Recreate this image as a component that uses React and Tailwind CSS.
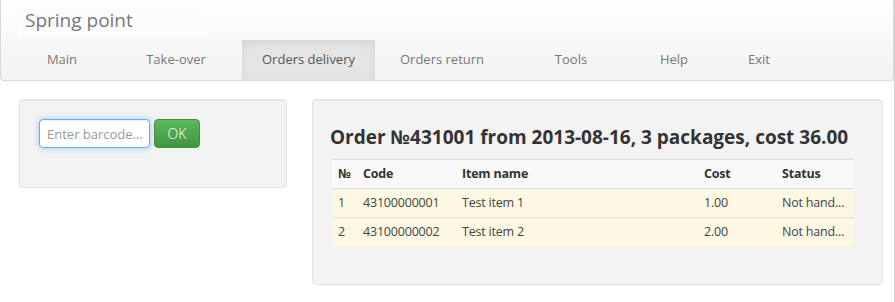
const navItems = [
  { label: "Main", w: "w-[96px]" },
  { label: "Take-over", w: "w-[132px]" },
  { label: "Orders delivery", w: "w-[133px]", active: true },
  { label: "Orders return", w: "w-[134px]" },
  { label: "Tools", w: "w-[124px]" },
  { label: "Help", w: "w-[82px]" },
  { label: "Exit", w: "w-[88px]" },
];

const rows = [
  { n: 1, code: "43100000001", name: "Test item 1", cost: "1.00", status: "Not hand..." },
  { n: 2, code: "43100000002", name: "Test item 2", cost: "2.00", status: "Not hand..." },
];

const App = () => {
  return (
    <div className="w-[895px] h-[302px] bg-white border-r border-[#d4d4d4] font-['Open_Sans',sans-serif] text-[#333]">
      <div className="w-[894px] h-[81px] rounded-b-[4px] border-x border-b border-[#dadada] bg-gradient-to-b from-white to-[#f2f2f2] shadow-[0_1px_4px_rgba(0,0,0,0.06)]">
        <div className="pt-[4px] pl-[17px]">
          <div className="w-[187px] h-[33px] bg-[#fcfcfc] pl-[7px] flex items-center text-[19px] text-[#777]">
            Spring point
          </div>
        </div>
        <div className="flex pl-[13px] mt-[3px]">
          {navItems.map((item) => (
            <div
              key={item.label}
              className={`${item.w} h-[40px] flex items-center justify-center text-[13px] ${
                item.active
                  ? "bg-[#e5e5e5] text-[#555] shadow-[inset_0_3px_8px_rgba(0,0,0,0.075)]"
                  : "text-[#777]"
              }`}
            >
              {item.label}
            </div>
          ))}
        </div>
      </div>

      <div className="flex items-start gap-[25px] pl-[19px] mt-[18px]">
        <div className="w-[268px] h-[89px] rounded-[4px] border border-[#e3e3e3] bg-[#f3f3f3] shadow-[inset_0_1px_1px_rgba(0,0,0,0.05)] pt-[19px] pl-[19px]">
          <div className="flex gap-[4px]">
            <input
              placeholder="Enter barcode..."
              className="w-[111px] h-[29px] rounded-[4px] border border-[#66afe9] bg-white px-[7px] text-[13px] text-[#555] placeholder:text-[#999] outline-none shadow-[inset_0_1px_1px_rgba(0,0,0,0.075),0_0_6px_rgba(102,175,233,0.6)]"
            />
            <button className="w-[46px] h-[29px] rounded-[4px] border border-[#3e8f3e] bg-gradient-to-b from-[#5cb85c] to-[#419641] text-white text-[14px] font-light">
              OK
            </button>
          </div>
        </div>

        <div className="w-[571px] h-[186px] rounded-[4px] border border-[#e3e3e3] bg-[#f3f3f3] shadow-[inset_0_1px_1px_rgba(0,0,0,0.05)] pl-[17px] pt-[24px]">
          <h3 className="text-[19px] font-bold text-[#333] leading-[26px]">
            Order №431001 from 2013-08-16, 3 packages, cost 36.00
          </h3>
          <table className="mt-[9px] ml-[2px] w-[521px] table-fixed border-collapse text-[12.5px] tracking-[-0.2px]">
            <colgroup>
              <col className="w-[25px]" />
              <col className="w-[99px]" />
              <col className="w-[242px]" />
              <col className="w-[78px]" />
              <col className="w-[77px]" />
            </colgroup>
            <thead>
              <tr className="h-[29px] bg-[#f9f9f9] border-t border-[#dddddd] text-left font-bold">
                <th className="px-[6px]">№</th>
                <th className="px-[6px]">Code</th>
                <th className="px-[6px]">Item name</th>
                <th className="px-[6px]">Cost</th>
                <th className="px-[6px]">Status</th>
              </tr>
            </thead>
            <tbody>
              {rows.map((r) => (
                <tr key={r.n} className="h-[29px] bg-[#fcf8e3] border-t border-[#dddddd] text-[#444]">
                  <td className="px-[6px]">{r.n}</td>
                  <td className="px-[6px]">{r.code}</td>
                  <td className="px-[6px]">{r.name}</td>
                  <td className="px-[6px]">{r.cost}</td>
                  <td className="px-[6px] whitespace-nowrap">{r.status}</td>
                </tr>
              ))}
            </tbody>
          </table>
        </div>
      </div>
    </div>
  );
};

export default App;
